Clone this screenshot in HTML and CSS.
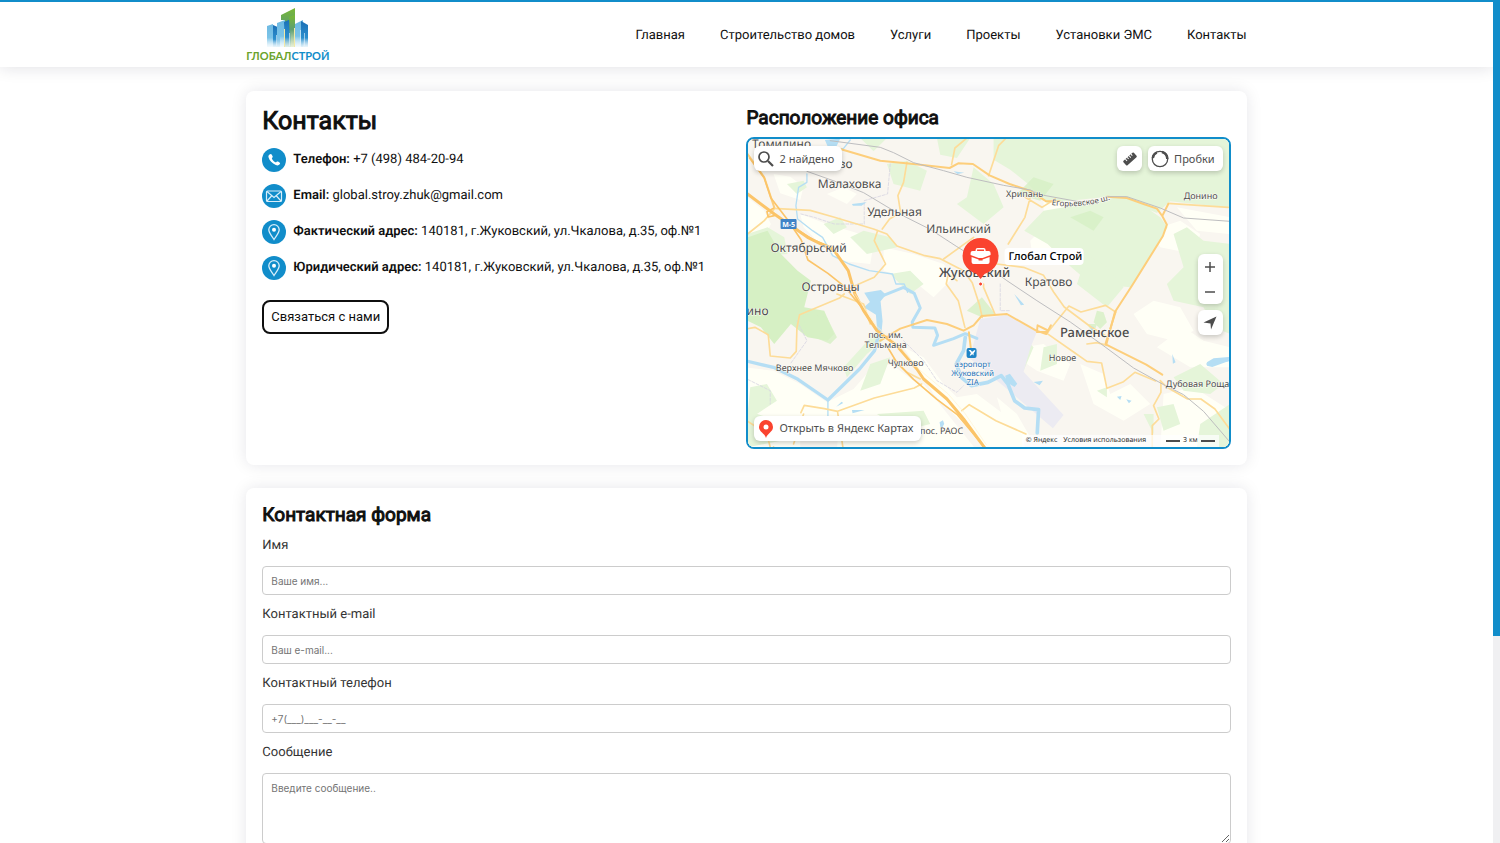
FILE: index.html
```html
<!DOCTYPE html>
<html lang="ru">
<head>
<meta charset="utf-8">
<meta name="viewport" content="width=device-width, initial-scale=1">
<title>Контакты — ГлобалСтрой</title>
<link rel="stylesheet" href="styles.css">
</head>
<body>
<div class="shell">
<div class="page">
<header class="header">
  <div class="container header-row">
    <a class="logo" href="#" aria-label="ГлобалСтрой">
      <svg class="logo-mark" width="42" height="42" viewBox="0 0 42 42" aria-hidden="true">
        <defs>
          <linearGradient id="blue" x1="0" y1="0" x2="0" y2="1"><stop offset="0" stop-color="#1a6fb5"/><stop offset=".65" stop-color="#2c8fce"/><stop offset="1" stop-color="#b9dff2" stop-opacity=".3"/></linearGradient>
          <linearGradient id="sky" x1="0" y1="0" x2="0" y2="1"><stop offset="0" stop-color="#6db9e2"/><stop offset=".6" stop-color="#7cc4e8"/><stop offset="1" stop-color="#e2f3fb" stop-opacity=".4"/></linearGradient>
          <linearGradient id="lime" x1="0" y1="0" x2="0" y2="1"><stop offset="0" stop-color="#78b833"/><stop offset=".45" stop-color="#5d9f70"/><stop offset="1" stop-color="#e3ecc8" stop-opacity=".5"/></linearGradient>
        </defs>
        <path fill="url(#sky)" d="M0 18 6 16V39H0z"/>
        <path fill="url(#blue)" d="M6 17 13 20V39H6z"/>
        <path fill="url(#sky)" d="M10 15 18 12V39H10z"/>
        <path fill="url(#lime)" d="M14 7 28 0V39H18V12H14z"/>
        <path fill="url(#blue)" d="M17 14 24 11V39H18z"/>
        <path fill="url(#lime)" d="M22 9 28 7V39H23z"/>
        <path fill="url(#sky)" d="M28 16 36 12V39H28z"/>
        <path fill="url(#blue)" d="M34 13 41 17V39H34z"/>
        <path stroke="#f3e9a6" stroke-width="1" d="M17.500 21V39M27.500 20V39"/>
        <path stroke="#e7f5fc" stroke-width="1" opacity=".6" d="M9.500 27V38M22.500 25V38M33.500 22V38M37.500 25V38"/>
      </svg>
      <span class="logo-text"><span class="logo-green">ГЛОБАЛ</span>СТРОЙ</span>
    </a>
    <nav class="nav" aria-label="Основное меню">
      <a href="#">Главная</a>
      <a href="#">Строительство домов</a>
      <a href="#">Услуги</a>
      <a href="#">Проекты</a>
      <a href="#">Установки ЭМС</a>
      <a href="#">Контакты</a>
    </nav>
  </div>
</header>
<main class="container main">
  <section class="card contacts">
    <div class="info">
      <h1>Контакты</h1>
      <ul class="list">
        <li><svg class="icon" viewBox="0 0 24 24" aria-hidden="true"><circle cx="12" cy="12" r="12" fill="#118dca"/><path fill="#fff" d="M7.600 6.500c1-.9 1.700-.6 2.200.3l.8 1.500c.3.600.1 1-.3 1.400-.5.500-.5.800-.1 1.500.8 1.300 1.700 2.200 3 3 .6.300.9.200 1.300-.3.400-.5.900-.6 1.500-.3l1.500.9c.8.500.8 1.100.2 1.800-1 1.200-2.300 1.400-3.900.7-3.700-1.500-6.300-4.200-7.300-7.700-.3-1.200.1-2.100 1.100-2.800z"/></svg><span><b>Телефон:</b> +7 (498) 484-20-94</span></li>
        <li><svg class="icon" viewBox="0 0 24 24" aria-hidden="true"><circle cx="12" cy="12" r="12" fill="#118dca"/><g fill="none" stroke="#d8eefa" stroke-width="1.200"><rect x="4.500" y="7" width="15" height="10.500" rx="1"/><path d="m5 7.500 7 6 7-6M5 17l4.500-5M19 17l-4.500-5"/></g></svg><span><b>Email:</b> global.stroy.zhuk@gmail.com</span></li>
        <li><svg class="icon" viewBox="0 0 24 24" aria-hidden="true"><circle cx="12" cy="12" r="12" fill="#118dca"/><path fill="none" stroke="#d8eefa" stroke-width="1.300" d="M12 19.500C10 16 6.800 13 6.800 9.800a5.200 5.200 0 0 1 10.400 0C17.200 13 14 16 12 19.500z"/><circle cx="12" cy="9.800" r="2" fill="#fff"/></svg><span><b>Фактический адрес:</b> 140181, г.Жуковский, ул.Чкалова, д.35, оф.№1</span></li>
        <li><svg class="icon" viewBox="0 0 24 24" aria-hidden="true"><circle cx="12" cy="12" r="12" fill="#118dca"/><path fill="none" stroke="#d8eefa" stroke-width="1.300" d="M12 19.500C10 16 6.800 13 6.800 9.800a5.200 5.200 0 0 1 10.400 0C17.200 13 14 16 12 19.500z"/><circle cx="12" cy="9.800" r="2" fill="#fff"/></svg><span><b>Юридический адрес:</b> 140181, г.Жуковский, ул.Чкалова, д.35, оф.№1</span></li>
      </ul>
      <button class="cta" type="button">Связаться с нами</button>
    </div>
    <div class="office">
      <h2>Расположение офиса</h2>
      <div class="map">
        <svg class="map-canvas" viewBox="748 139 481 308" preserveAspectRatio="xMidYMid slice" role="img" aria-label="Карта Жуковского и окрестностей">
          <rect x="740" y="130" width="500" height="330" fill="#f9f6f0"/>
          <!-- terrain is drawn on a grid three times finer than the labels -->
          <g transform="translate(744 134) scale(.333333)" stroke-linejoin="round" stroke-linecap="round">
            <g fill="#fffff6">
              <path d="M12 190l50 40 20 40-20 40-50 20zM90 120l50 8 40 30-10 40-60-20zM170 240l80 30 100 30 40 30-10 60-90-10-60-50-50-50zM250 180l50-20 40 20-30 30zM420 340l90 20 90 30 30 40-60 60-60-50-90-30zM0 700l90 10 80 40 80 55 80-40 70-80 50 10 80 60 50 60-60 30-160 40-110-20-80 30v110H0zM480 640l60 30 60 80 40 40 60-10 80 60 60 80 10 60-100-20-70-70-110-110zM290 800l120 0 130-50 160 200H280zM760 790l60 50 40 70-60 20zM840 640l60-10 80 60-20 50-80-30-60-40zM900 180l60 20 0 40-60 10zM860 320l60-60 40 30-30 80-60 20zM1010 690l70 30 20 60 60-30 60 60-80 50-90-50zM1170 540l60-40 80 20 40 70-60 30-80-20zM1220 290l90-30 60 40-20 60-100-20zM1300 220l160 30v50l-100-10zM1120 140l40-20 30 20-30 60-30-10zM1240 640l80-60 60 40 80 20v60l-120 0zM1260 780l90-20 110 70v120H1250z"/>
            </g>
            <g fill="#e5f5d9">
              <path d="M750 12h710v210l-180-20-40 35-60-25-70-25-200 20-60-60-50-40-50-30zM900 230l120-20 100-20 80 25 50 35 22 30-110 180-120-10-70-60-60-60-70-40zM1290 300l40-20 50 40 80 10v270l-50-20-30-60-90-20-20-50 50-50z"/>
              <path d="M580 12h100l-40 60-50-10zM430 90l60-10 60 30-20 60-80-20zM640 210l30-20 20-90 60 50 30 70-60 50zM320 310l40-20 80 20 20 30-90 20zM240 270l50-20 20 30-40 20zM130 150l50-10 10 20-30 20zM440 420l60-10 40 40-40 30zM400 590l30 20-60 50-60 70-10-30zM380 690l60-20-30 80-60 20zM12 300l60-20 50 30 10 50-120 10zM20 760l50-10 30 50-90 60zM12 830l60 20 40 70-100 20zM400 840l140-10 20 40-80 20zM900 640l40-10 0 60-50 20zM1240 820l50-10 20 60-50 20zM1290 730l80-40 70 60-40 30-80-10zM1370 870l90-60v130h-100zM1000 450l30-90 60 40 50 60-50 60zM1060 770l30-10 0 30zM350 12h80l-40 40zM850 620l20 20-30 70-20 10zM1200 840l30 0v60z"/>
            </g>
            <g fill="#d6f0c4">
              <path d="M12 310l60-20 40 70 50 50 40 30-20 80 60 10 30 70-20 20-60-10-50-40-50 60-40-50-40-20z"/><path d="M180 540l70 10 30 60-20 20-70-30zM670 530l45-40 40 50-40 10zM1060 530l20 5 10 30-20 20-20-20zM1030 570l30 0-10 30zM980 250l60-20 40 20-30 40zM820 180l50-50 60 20-40 50z" opacity=".8"/>
            </g>
            <path fill="#ecebf2" d="M710 555l80-12 90 50-20 50-20 70 120 130-32 40-140-120-110-90z"/>
            <g fill="none" stroke="#d8d6e2" stroke-width="2.500" stroke-dasharray="9 5">
              <path d="M440 90l-8 90-70 20 0 70-50 0-40 0-60-20-40-10M480 620l60 60 40 60 60 35 20-20M770 450l0 80 30 0M160 560l30 60-50 70M0 730l80 40 0 40"/>
            </g>
            <g fill="none" stroke="#b5def4">
              <path stroke-width="4" d="M190 120l0 25-25 15-8 55 5 40 45 35 30 20 30 55 50 25 60 20 70 10 10 30 25 0 10 25"/>
              <path stroke-width="10" d="M408 590l-15 60-45 55-95 93-90-62-70-35-85-20"/>
              <path stroke-width="9" d="M405 490l75-30 32 18 18 44-24 42 2 16 66 2 8 22-12 30 60-20 35-15 35 14"/>
              <path stroke-width="11" d="M665 610l-5 40-22 40 15 40 30 25 50-10 40-20 20 25 20 50 30 22 42 5-4 70"/>
              <path stroke-width="4" d="M253 798v50M320 18l-20 25-40 10M1390 690l66-10"/>
            </g>
            <g fill="#b5def4">
              <path d="M362 476l50-8 15 14-16 20 6 60-4 40-12-10-4-50-36-22 18-16zM244 18l46-4-15 30-22-5zM325 210l44-5-15 10h-26zM812 480l30 32-10 2zM1390 685l20-12 46-4v12l-50 18-16-4zM1286 660l10 25-8 4zM785 725l14-6 22 30-8 10-24-14zM325 828l38 0-36 10zM1120 788l14-2-4 12zM1148 796l16 4-8 8zM588 865l10-6 4 10-10 20zM278 818l16-15 5 4zM870 744l28-4-10 14zM630 112l32 4-20 4zM1040 575l12 5-8 14z"/>
            </g>
            <g fill="none" stroke="#fddc98" stroke-width="5">
              <path d="M90 223l110 6 70 20 120 36 40 15 30 36 80 28 50 10 70 36 26 36 22 68 8 36"/>
              <path d="M490 85l-10 60-17 40 8 50-33 20-22 30M402 290l-10 30 34 70-34 40-92 40M302 480l-14 12-120 50-8 40-2 70-18 20-60-6-6-64-40-22-22 4M12 300l50-40 30-35"/>
              <path d="M670 12l-36 30-10 50M735 125l30-90 20-20M860 190l-16 60-50 80M845 190l50 30 40-25M760 390l80 10 60 24 30 50 32 45 80 60 50 30M640 440l-26-20-6 30 36 50 20 80M720 450l0 10 34 80M600 375l90-65M910 598l66-82 36 18 74-20 30 20M1274 208l180 12M1250 740l20 20 62 35h40l42 30 44 60"/>
              <path d="M172 836l10-22 60 10 40 8 110-40 120-30 22-12M282 834l16 106M655 830l22-18 80 48 90 40M530 735l-40-20-40-40M180 840l-30 90M280 480l80 30 20 60M80 940l-10-40-60-40"/>
              <path d="M910 598l80 56 40 28 44 5 16 76 50-20 34-28 62 26M1252 745l0 30-22 40 16 40-20 20v70M1030 630l30-4 30 8"/>
            </g>
            <g fill="none" stroke="#fdce7b" stroke-width="6">
              <path d="M290 45l120 35 100 10 108 12 26-14 44 2 50 34 60 26 60 20 50 32 40 0M1090 188l60 4 50 18 40 14 16 22 18-36M1256 246l14 26-12 34-92 148-52 80-26 98 120 60 48 30"/>
              <path d="M1116 534l-30 95M410 620l60-36 80-26 60 12 50 20 30-16 24-28 76-6 88 50 30 10 14-26M880 594h32M880 594l2-20 28 14M90 940l0 0M676 595l6 50M12 60l50 70 30 90"/>
            </g>
            <g fill="none" stroke="#fbc469" stroke-width="9">
              <path d="M12 180l80 60 100 70 80 40 42 60 20 70 26 50 40 60 60 45 60 70 20 30 70 60 50 60 66 90"/>
              <path stroke-width="5" d="M92 245l-18 4-4-16 20-10M18 72l44 60 20 60 46 60 45 66 20 60 60 40 50 40 50 60 30 50M130 268l80 50 60 24M430 636l30 50 50 50 70 60 60 45 80 95"/>
            </g>
            <path fill="none" stroke="#fff3d2" stroke-width="2" d="M334 480l66 98 60 50 64 76 90 76 50 58 64 94"/>
            <g fill="none" stroke="#bdbdbf" stroke-width="3">
              <path d="M260 20l150 20 40 16 60 30 90 24 70 20 110 24 80 14 30 14 110 20 60 4M1090 188h60l100 34 70 30 140 10"/>
              <path d="M190 112l90 32 80 32 100 60 100 50 80 52 80 50 70 52 90 60 100 64 90 64 100 74 90 50 60 30 60 50 120 140"/>
            </g>
          </g>
          <rect x="781" y="219" width="16" height="10" rx="1" fill="#4083c7"/><text x="789" y="227" class="m-road">М-5</text>
          <g class="m-town">
            <text x="782" y="148">Томилино</text><text x="846" y="168">во</text>
            <text x="850" y="188">Малаховка</text><text x="895" y="216">Удельная</text>
            <text x="959" y="233">Ильинский</text><text x="809" y="252">Октябрьский</text>
            <text x="831" y="291">Островцы</text><text x="758" y="315">ино</text>
            <text x="1049" y="286">Кратово</text>
          </g>
          <g class="m-city"><text x="975" y="277">Жуковский</text><text x="1095" y="337">Раменское</text></g>
          <g class="m-village">
            <text x="1025" y="197">Хрипань</text><text x="1201" y="199">Донино</text>
            <text x="886" y="338">пос. им.</text><text x="886" y="348">Тельмана</text>
            <text x="906" y="366">Чулково</text><text x="815" y="371">Верхнее Мячково</text>
            <text x="1063" y="361">Новое</text><text x="1198" y="387">Дубовая Роща</text><text x="942" y="434">пос. РАОС</text>
          </g>
          <path id="shosse" d="M1052 205q28 4 58-5" fill="none"/>
          <text class="m-street"><textPath href="#shosse">Егорьевское ш.</textPath></text>
          <rect x="967" y="348" width="10" height="10" rx="2" fill="#1f84c6"/><path fill="#fff" d="M969 350l2 0 1.500 1.800 2.500-1.800.8.800-1.800 2.400v2.300l-1.300-1.200-2 1.500-.6-.6 1.300-2.200z"/>
          <g class="m-air"><text x="973" y="367">аэропорт</text><text x="973" y="376">Жуковский</text><text x="973" y="385">ZIA</text></g>
          <path fill="#fa432f" d="M981 238a18 18 0 0 1 18 18c0 9-6 15-14 18l-4 5-4-5c-8-3-14-9-14-18a18 18 0 0 1 18-18z"/><circle cx="981" cy="284" r="2" fill="#fa432f" stroke="#fff" stroke-width="1"/>
          <path fill="#fff" d="M973 251h3v-1q0-2 2-2h6q2 0 2 2v1h3q2 0 2 2v2l-8 3h-4l-8-3v-2q0-2 2-2zm4.500 0h7v-1.500h-7zM972 257l7 2.500v1h4v-1l7-2.500v5q0 2-2 2h-14q-2 0-2-2z"/>
          <rect x="1005" y="248" width="79" height="17" rx="4" fill="#fff"/><text x="1009" y="260" class="m-place">Глобал Строй</text>
        </svg>
        <div class="map-top">
          <button class="map-btn" type="button"><svg width="16" height="16" viewBox="0 0 16 16" aria-hidden="true"><circle cx="6" cy="6" r="5" fill="none" stroke="#4d4d4d" stroke-width="1.700"/><path stroke="#4d4d4d" stroke-width="2.200" d="m10 10 5 5"/></svg>2 найдено</button>
          <button class="map-btn map-square map-push" type="button" aria-label="Линейка"><svg width="16" height="16" viewBox="0 0 16 16" aria-hidden="true"><g transform="rotate(-42 8 8)"><rect x="1" y="5" width="14" height="6" rx="1" fill="#4d4d4d"/><path stroke="#fff" stroke-width="1" d="M4.500 5v2.500M7 5v2M9.500 5v2.500M12 5v2"/></g></svg></button>
          <button class="map-btn map-traffic" type="button"><svg width="18" height="18" viewBox="0 0 18 18" aria-hidden="true"><circle cx="9" cy="9" r="7.700" fill="none" stroke="#4d4d4d" stroke-width="1.300"/><path fill="none" stroke="#4d4d4d" stroke-width="2.500" d="M1.800 8a7.300 7.300 0 0 1 4-5.500M11 2a7.300 7.300 0 0 1 5.300 7"/></svg>Пробки</button>
        </div>
        <div class="map-side">
          <div class="map-zoom"><button type="button" aria-label="Приблизить"><svg width="12" height="12" viewBox="0 0 12 12" aria-hidden="true"><path stroke="#4d4d4d" stroke-width="1.500" d="M6 1v10M1 6h10"/></svg></button><button type="button" aria-label="Отдалить"><svg width="12" height="12" viewBox="0 0 12 12" aria-hidden="true"><path stroke="#4d4d4d" stroke-width="1.500" d="M1 6h10"/></svg></button></div>
          <button class="map-btn map-square" type="button" aria-label="Моё местоположение"><svg width="14" height="14" viewBox="0 0 14 14" aria-hidden="true"><path fill="#4d4d4d" d="M13.500.5 8 13.500 7.500 7.500 .5 6.500z"/></svg></button>
        </div>
        <a class="map-btn map-open" href="#"><svg width="16" height="18" viewBox="0 0 15 18" aria-hidden="true"><path fill="#fa432f" d="M7.500 0a7 7 0 0 1 7 7c0 5-5.500 6-7 11-1.500-5-7-6-7-11a7 7 0 0 1 7-7z"/><circle cx="7.500" cy="7" r="2.500" fill="#fff"/></svg>Открыть в Яндекс Картах</a>
        <div class="map-legal"><span>© Яндекс</span><a href="#">Условия использования</a><span class="map-scale">3 км</span></div>
      </div>
    </div>
  </section>
  <form class="card form">
    <h2>Контактная форма</h2>
    <label for="name">Имя</label>
    <input id="name" type="text" placeholder="Ваше имя...">
    <label for="email">Контактный e-mail</label>
    <input id="email" type="email" placeholder="Ваш e-mail...">
    <label for="phone">Контактный телефон</label>
    <input id="phone" type="tel" placeholder="+7(___)___-__-__">
    <label for="message">Сообщение</label>
    <textarea id="message" placeholder="Введите сообщение.."></textarea>
  </form>
</main>
</div>
<div class="scroll-track" aria-hidden="true"><div class="scroll-thumb"></div></div>
</div>
</body>
</html>
```
FILE: styles.css
```css
* { box-sizing: border-box; }
body { margin: 0; background: #fff; color: #0f0f0f; font: 13px/20px Roboto, "Noto Sans", sans-serif; text-rendering: geometricPrecision; }
.shell { display: grid; grid-template-columns: minmax(0, 1fr) 7px; height: 100vh; }
.page { overflow-y: auto; scrollbar-width: none; }
.scroll-track { background: #f0f0f2; }
.scroll-thumb { height: 75.5%; background: #118dca; }
.container { width: 67%; min-width: 960px; margin: 0 auto; }

.header { border-top: 2px solid #118dca; background: #fff; box-shadow: 0 0 16px rgba(20, 20, 50, .14); }
.header-row { display: flex; align-items: center; justify-content: space-between; height: 65px; padding-top: 2px; }
.logo { display: flex; flex-direction: column; align-items: center; color: #118dca; text-decoration: none; }
.logo-mark { display: block; }
.logo-text { font: 700 11px/13px Lato, sans-serif; }
.logo-green { color: #6ba32c; }
.nav { display: flex; gap: 35px; }
.nav a { color: #0f0f0f; font-size: 13px; text-decoration: none; }

.main { display: flex; flex-direction: column; gap: 23px; padding-top: 24px; }
.card { padding: 16px; border-radius: 8px; background: #fff; box-shadow: 0 0 16px rgba(20, 20, 50, .1); }
.contacts { display: grid; grid-template-columns: 1fr 1fr; }
h1, h2 { margin: 0; font-weight: 400; -webkit-text-stroke: 1px #0f0f0f; }
h1 { font-size: 25px; line-height: 29px; }
h2 { font-size: 19px; line-height: 22px; }
.list { display: flex; flex-direction: column; gap: 12px; margin: 12px 0 20px; padding: 0; list-style: none; }
.list li { display: flex; align-items: center; gap: 7px; }
.icon { width: 24px; height: 24px; flex: none; }
b { font-weight: 600; }
.cta { padding: 5px 7px; border: 2px solid #0f0f0f; border-radius: 8px; background: #fff; color: #0f0f0f; font: inherit; }

.map { position: relative; height: 312px; margin-top: 8px; overflow: hidden; border: 2px solid #118dca; border-radius: 8px; }
.map-canvas { display: block; width: 100%; height: 100%; font-family: "Noto Sans", sans-serif; }
.map-canvas text { fill: #4d4d4d; text-anchor: middle; paint-order: stroke; stroke: #fffdf8; stroke-width: 1px; }
.map-canvas .m-town { font-size: 12px; }
.map-canvas .m-city { font-size: 13px; font-weight: 500; }
.map-canvas .m-village { font-size: 9px; }
.map-canvas .m-street { font-size: 8px; text-anchor: start; }
.map-canvas .m-air { font-size: 8px; }
.map-canvas .m-air text { fill: #2572b8; }
.map-canvas .m-road { font-size: 7px; font-weight: 700; fill: #fff; stroke: none; }
.map-canvas .m-place { font-size: 11px; font-weight: 500; fill: #000; stroke: none; text-anchor: start; }
.map-top { position: absolute; top: 7px; right: 6px; left: 6px; display: flex; gap: 6px; }
.map-btn { display: flex; align-items: center; gap: 5px; height: 25px; padding: 0 8px 0 4px; border: 0; border-radius: 6px; background: #fff; color: #4d4d4d; font: 11px/16px "Noto Sans", sans-serif; text-decoration: none; box-shadow: 0 2px 5px rgba(0, 0, 0, .2); }
.map-square { width: 25px; padding: 0; justify-content: center; }
.map-push { margin-left: auto; }
.map-traffic { padding-left: 3px; }
.map-side { position: absolute; top: 115px; right: 6px; display: flex; flex-direction: column; gap: 6px; }
.map-zoom { display: flex; flex-direction: column; border-radius: 6px; background: #fff; box-shadow: 0 2px 5px rgba(0, 0, 0, .2); }
.map-zoom button { display: flex; align-items: center; justify-content: center; width: 25px; height: 25px; padding: 0; border: 0; background: none; }
.map-open { position: absolute; bottom: 6px; left: 6px; }
.map-legal { position: absolute; right: 10px; bottom: 0; display: flex; gap: 6px; padding: 0 4px; background: rgba(255, 255, 255, .7); color: #222; font: 7px/12px "Open Sans", sans-serif; }
.map-legal a { color: inherit; text-decoration: none; }
.map-scale { display: flex; align-items: center; gap: 3px; margin-left: 14px; }
.map-scale::before, .map-scale::after { content: ""; width: 14px; height: 2px; background: #4d4d4d; }

.form { display: flex; flex-direction: column; }
.form label { margin: 10px 0; color: #333; }
.form input, .form textarea { width: 100%; border: 1px solid #ccc; border-radius: 4px; background: #fff; padding: 0 8px; font: 10px/14px Inter, sans-serif; color: #333; }
.form input { height: 29px; }
.form textarea { height: 71px; padding-top: 7px; }
.form ::placeholder { color: #757575; }
```
